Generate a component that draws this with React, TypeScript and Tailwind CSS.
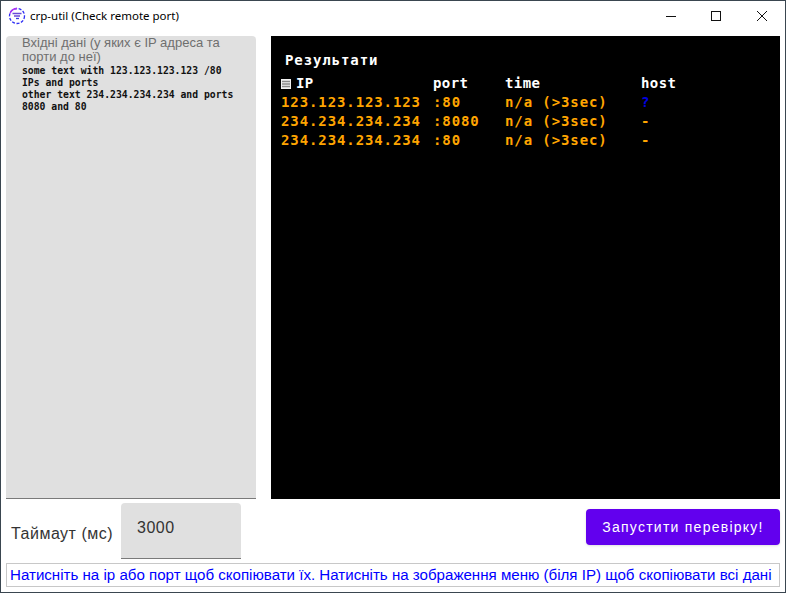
const rows = [
  { ip: "123.123.123.123", port: ":80", host: "?", hostColor: "text-[#0000e0]" },
  { ip: "234.234.234.234", port: ":8080", host: "-", hostColor: "text-[#ffa500]" },
  { ip: "234.234.234.234", port: ":80", host: "-", hostColor: "text-[#ffa500]" },
];

function AppIcon() {
  return (
    <svg width="18" height="18" viewBox="0 0 18 18" fill="none">
      <circle cx="9" cy="9" r="7.5" stroke="#2f2ff5" strokeWidth="1.3" strokeDasharray="3 1.6" />
      <path d="M2 6.5A7.5 7.5 0 0 1 9 1.5" stroke="#b030f5" strokeWidth="1.3" />
      <path d="M4.5 6.5h9M6 9h6" stroke="#6a4ad8" strokeWidth="1.3" />
      <path d="M8 11.5h3" stroke="#3a3ae0" strokeWidth="1.3" />
    </svg>
  );
}

function TitleBar() {
  return (
    <div className="flex h-[30px] items-center justify-between">
      <div className="flex items-center pl-[7px]">
        <AppIcon />
        <span className="ml-[4px] font-['Noto_Sans',sans-serif] text-[11.5px] text-black">crp-util (Check remote port)</span>
      </div>
      <div className="flex items-center pr-[17px]">
        <svg width="12" height="12" viewBox="0 0 12 12" className="mr-[33px]">
          <path d="M1 6.5h10" stroke="#111" strokeWidth="1" />
        </svg>
        <svg width="12" height="12" viewBox="0 0 12 12" className="mr-[34px]">
          <rect x="1.5" y="1.5" width="9" height="9" fill="none" stroke="#111" strokeWidth="1" />
        </svg>
        <svg width="12" height="12" viewBox="0 0 12 12">
          <path d="M1 1l10 10M11 1L1 11" stroke="#111" strokeWidth="1" />
        </svg>
      </div>
    </div>
  );
}

function MenuIcon() {
  return (
    <svg width="10" height="10" viewBox="0 0 10 10" className="mr-[5px]">
      <rect width="10" height="10" fill="#f2f2f2" />
      <path d="M1 2.5h8M1 5h8M1 7.5h8" stroke="#8a8a8a" strokeWidth="1.4" />
    </svg>
  );
}

function InputPanel() {
  return (
    <div className="h-[463px] w-[250px] rounded-t-[4px] border-b border-[#7a7a7a] bg-[#e0e0e0] px-[16px]">
      <p className="text-[13px] leading-[14px] text-[#6f6f6f]">Вхідні дані (у яких є IP адреса та порти до неї)</p>
      <p className="mt-[1px] font-['DejaVu_Sans_Mono',monospace] text-[9.75px] leading-[12px] font-bold text-[#111]">
        some text with 123.123.123.123 /80
        <br />
        IPs and ports
        <br />
        other text 234.234.234.234 and ports
        <br />
        8080 and 80
      </p>
    </div>
  );
}

function ResultsPanel() {
  return (
    <div className="ml-[15px] h-[463px] w-[509px] bg-black pl-[10px] pt-[14px] font-['DejaVu_Sans_Mono',monospace] text-[14px] font-bold tracking-[0.9px]">
      <div className="pl-[4px] leading-[20px] text-white">Результати</div>
      <div className="mt-[4px] flex h-[19px] items-center tracking-[0.4px] text-white">
        <div className="flex w-[152px] items-center">
          <MenuIcon />
          IP
        </div>
        <div className="w-[72px]">port</div>
        <div className="w-[136px]">time</div>
        <div>host</div>
      </div>
      {rows.map((row, i) => (
        <div key={i} className="flex h-[19px] items-center text-[#ffa500]">
          <div className="w-[152px]">{row.ip}</div>
          <div className="w-[72px]">{row.port}</div>
          <div className="w-[136px]">n/a (&gt;3sec)</div>
          <div className={row.hostColor}>{row.host}</div>
        </div>
      ))}
    </div>
  );
}

export default function App() {
  return (
    <div className="h-[593px] w-[786px] border border-[#3a4650] bg-white font-['Liberation_Sans',Arial,sans-serif]">
      <TitleBar />
      <div className="flex px-[5px] pt-[5px]">
        <InputPanel />
        <ResultsPanel />
      </div>
      <div className="flex items-start px-[5px] pt-[4px]">
        <span className="mt-[22px] ml-[5px] text-[16px] leading-[18px] tracking-[0.5px] text-[#333]">Таймаут (мс)</span>
        <div className="ml-[8px] h-[56px] w-[120px] rounded-t-[4px] border-b border-[#7a7a7a] bg-[#e0e0e0] pl-[16px] pt-[15px] text-[16px] leading-[20px] tracking-[0.5px] text-[#333]">
          3000
        </div>
        <button className="mt-[6px] ml-auto h-[36px] w-[194px] rounded-[4px] bg-[#6200ee] text-[14px] font-medium tracking-[1.25px] text-white shadow-sm">
          Запустити перевірку!
        </button>
      </div>
      <div className="mx-[5px] mt-[4px] flex h-[24px] items-center border border-[#c8c8c8] pl-[3px] text-[15.1px] text-[#0000ff]">
        Натисніть на ір або порт щоб скопіювати їх. Натисніть на зображення меню (біля IP) щоб скопіювати всі дані
      </div>
    </div>
  );
}
